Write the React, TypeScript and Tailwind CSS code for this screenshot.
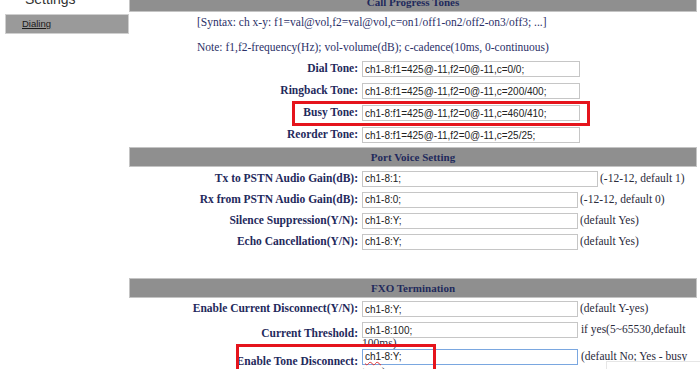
import React from "react";

// Plain field box, looks like the old gateway form inputs
const Field = ({ value, w }: { value: string; w: string }) => (
  <input
    readOnly
    value={value}
    className={`${w} h-[16px] border border-[#c6c6c6] bg-white px-[2px] align-middle text-[10px] leading-[14px] text-[#222] outline-none`}
    style={{ fontFamily: '"Liberation Sans", Arial, sans-serif' }}
  />
);

const Label = ({ text }: { text: string }) => (
  <div className="w-[233px] shrink-0 self-center pr-[4px] text-right text-[11.5px] font-bold text-[#1f2a5c]">
    {text}
  </div>
);

const Header = ({ title, className = "" }: { title: string; className?: string }) => (
  <div
    className={`flex h-[20px] items-center justify-center border border-[#c4c4c4] bg-[#8f8f8f] text-[11px] font-bold text-[#1f2a5c] ${className}`}
  >
    {title}
  </div>
);

const toneRows = [
  { label: "Dial Tone:", value: "ch1-8:f1=425@-11,f2=0@-11,c=0/0;" },
  { label: "Ringback Tone:", value: "ch1-8:f1=425@-11,f2=0@-11,c=200/400;" },
  { label: "Busy Tone:", value: "ch1-8:f1=425@-11,f2=0@-11,c=460/410;" },
  { label: "Reorder Tone:", value: "ch1-8:f1=425@-11,f2=0@-11,c=25/25;" },
];

const voiceRows = [
  { label: "Tx to PSTN Audio Gain(dB):", value: "ch1-8:1;", w: "w-[236px]", note: "(-12-12, default 1)" },
  { label: "Rx from PSTN Audio Gain(dB):", value: "ch1-8:0;", w: "w-[216px]", note: "(-12-12, default 0)" },
  { label: "Silence Suppression(Y/N):", value: "ch1-8:Y;", w: "w-[216px]", note: "(default Yes)" },
  { label: "Echo Cancellation(Y/N):", value: "ch1-8:Y;", w: "w-[216px]", note: "(default Yes)" },
];

export default function App() {
  return (
    <div
      className="relative flex h-[369px] w-[700px] overflow-hidden bg-white"
      style={{ fontFamily: '"Liberation Serif", "Times New Roman", serif' }}
    >
      {/* left menu */}
      <div className="w-[129px] shrink-0" style={{ fontFamily: '"Liberation Sans", Arial, sans-serif' }}>
        <div className="mt-[-9px] pl-[25px] text-[14px] leading-[17px] text-[#333]">Settings</div>
        <div className="ml-[5px] mt-[6px] flex h-[20px] items-center border border-[#cfcfcf] bg-[#9a9a9a] pl-[16px]">
          <span className="text-[9.5px] text-[#1a1a1a] underline">Dialing</span>
        </div>
      </div>

      {/* main form */}
      <div className="w-[568px] shrink-0">
        <Header title="Call Progress Tones" className="mt-[-8px]" />
        <div className="mt-[3px] pl-[68px] text-[11.5px] leading-[14px] text-[#2b3068]">
          [Syntax: ch x-y: f1=val@vol,f2=val@vol,c=on1/off1-on2/off2-on3/off3; ...]
        </div>
        <div className="mt-[11px] pl-[68px] text-[11.5px] leading-[14px] text-[#2b3068]">
          Note: f1,f2-frequency(Hz); vol-volume(dB); c-cadence(10ms, 0-continuous)
        </div>
        <div className="mt-[4px]">
          {toneRows.map((r) => (
            <div key={r.label} className="flex h-[22px] items-center">
              <Label text={r.label} />
              <Field value={r.value} w="w-[218px]" />
            </div>
          ))}
        </div>

        <Header title="Port Voice Setting" className="mt-[1px]" />
        <div className="mt-[1px]">
          {voiceRows.map((r) => (
            <div key={r.label} className="flex h-[21px] items-center">
              <Label text={r.label} />
              <Field value={r.value} w={r.w} />
              <span className="ml-[2px] text-[11.5px] text-[#2a2a3a]">{r.note}</span>
            </div>
          ))}
        </div>

        <Header title="FXO Termination" className="mt-[26px]" />
        <div className="flex h-[22px] items-center">
          <Label text="Enable Current Disconnect(Y/N):" />
          <Field value="ch1-8:Y;" w="w-[216px]" />
          <span className="ml-[2px] text-[11.5px] text-[#2a2a3a]">(default Y-yes)</span>
        </div>
        <div className="flex h-[27px]">
          <Label text="Current Threshold:" />
          <div className="pt-[2px] text-[11.5px] leading-[11px] text-[#2a2a3a]">
            <Field value="ch1-8:100;" w="w-[216px]" /> if yes(5~65530,default 100ms)
          </div>
        </div>
        <div className="flex h-[30px]">
          <Label text="Enable Tone Disconnect:" />
          <div className="pt-[2px] text-[11.5px] leading-[14px] text-[#2a2a3a]">
            <span
              className="inline-block h-[16px] w-[216px] border border-[#7aa7e0] bg-white px-[2px] align-middle text-[10px] leading-[14px] text-[#222]"
              style={{ fontFamily: '"Liberation Sans", Arial, sans-serif' }}
            >
              <span className="underline decoration-[#e03030] decoration-wavy">ch1</span>-8:Y;
            </span>{" "}
            (default No; Yes - busy tone)
          </div>
        </div>
      </div>

      {/* red highlight boxes drawn over the form */}
      <div className="absolute left-[292px] top-[101px] h-[25px] w-[298px] border-[3px] border-[#e5141c]" />
      <div className="absolute left-[236px] top-[344px] h-[40px] w-[200px] border-[3px] border-[#e5141c]" />
      <div className="absolute left-[606px] top-[361px] h-[20px] w-[100px] border border-[#e6e6e6] bg-white" />
    </div>
  );
}
